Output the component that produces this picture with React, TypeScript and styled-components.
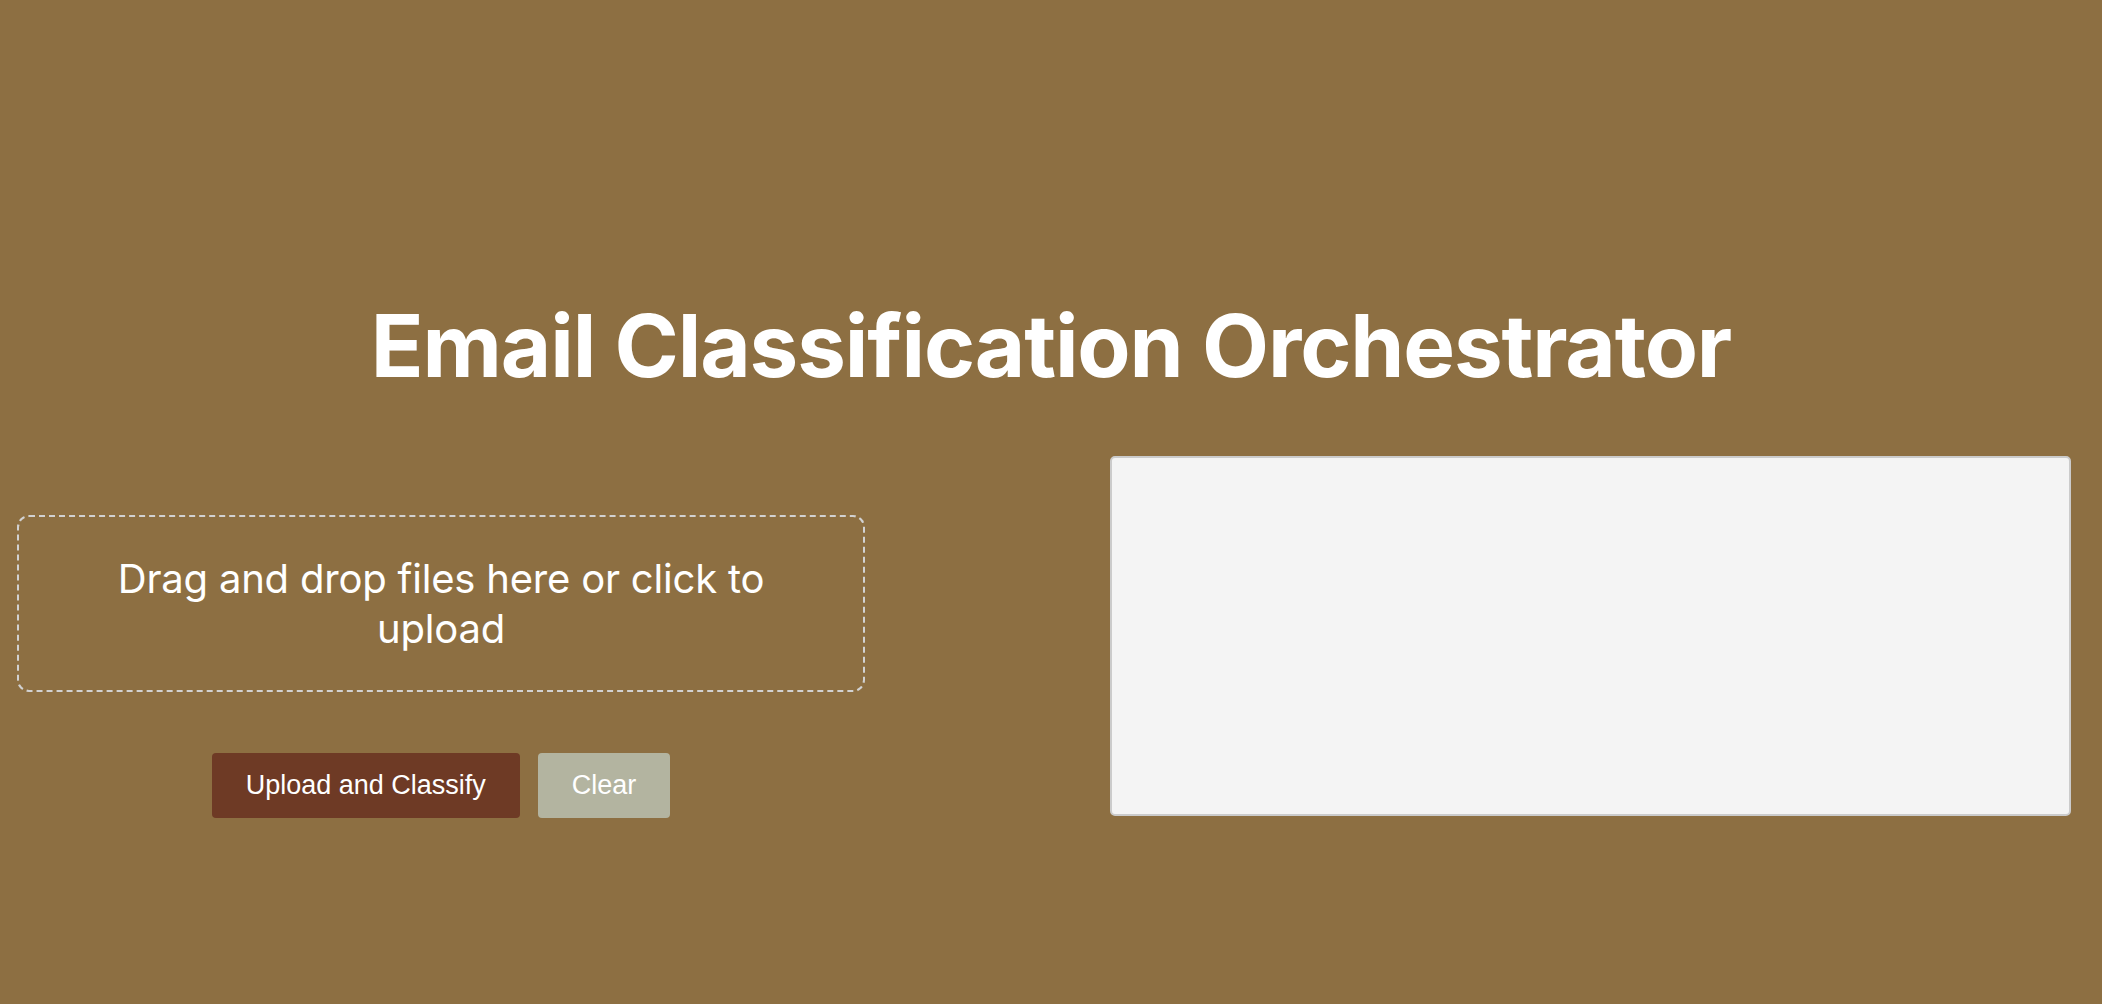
import { FC } from "react";
import styled, { createGlobalStyle } from "styled-components";

const GlobalStyle = createGlobalStyle`
html, body{
  margin: 0;
  padding: 0;
  background-color: #8d6f42;
  font-family: Inter, "Noto Sans", sans-serif;
}
`

const Page = styled.main`
min-height: 1004px;
box-sizing: border-box;
display: flex;
flex-direction: column;
padding-top: 300px;
`

const Title = styled.h1`
margin: 0;
text-align: center;
color: #ffffff;
font-family: Inter, "Noto Sans", sans-serif;
font-weight: 700;
font-size: 87px;
line-height: 92px;
letter-spacing: -0.013em;
`

const Workspace = styled.section`
display: flex;
align-items: flex-start;
padding: 64px 31px 0 17px;
gap: 245px;
`

const LeftColumn = styled.div`
width: 848px;
padding-top: 59px;
display: flex;
flex-direction: column;
align-items: center;
gap: 61px;
`

const DropZone = styled.div`
box-sizing: border-box;
width: 100%;
height: 177px;
border: 2px dashed #d2d2d2;
border-radius: 12px;
display: flex;
align-items: center;
justify-content: center;
padding: 0 50px;
text-align: center;
color: #ffffff;
font-size: 40px;
line-height: 50px;
letter-spacing: -0.005em;
cursor: pointer;
`

const ButtonRow = styled.div`
display: flex;
gap: 18px;
`

const ActionButton = styled.button<{variant:"primary"|"muted"}>`
height: 65px;
padding: 0 34px;
border: none;
border-radius: 4px;
font-family: "Liberation Sans", Arial, sans-serif;
font-size: 27px;
color: #ffffff;
background-color: ${({variant})=>variant==="primary"?"#6e3a25":"#b3b4a0"};
cursor: pointer;
`

const ResultBox = styled.div`
box-sizing: border-box;
width: 961px;
height: 360px;
background-color: #f4f4f4;
border: 2px solid #cbcbcb;
border-radius: 5px;
`

const App:FC = ()=>{
  return(
    <Page>
      <GlobalStyle/>
      <Title>Email Classification Orchestrator</Title>
      <Workspace>
        <LeftColumn>
          <DropZone>Drag and drop files here or click to upload</DropZone>
          <ButtonRow>
            <ActionButton variant="primary">Upload and Classify</ActionButton>
            <ActionButton variant="muted">Clear</ActionButton>
          </ButtonRow>
        </LeftColumn>
        <ResultBox/>
      </Workspace>
    </Page>
  )
}

export default App
